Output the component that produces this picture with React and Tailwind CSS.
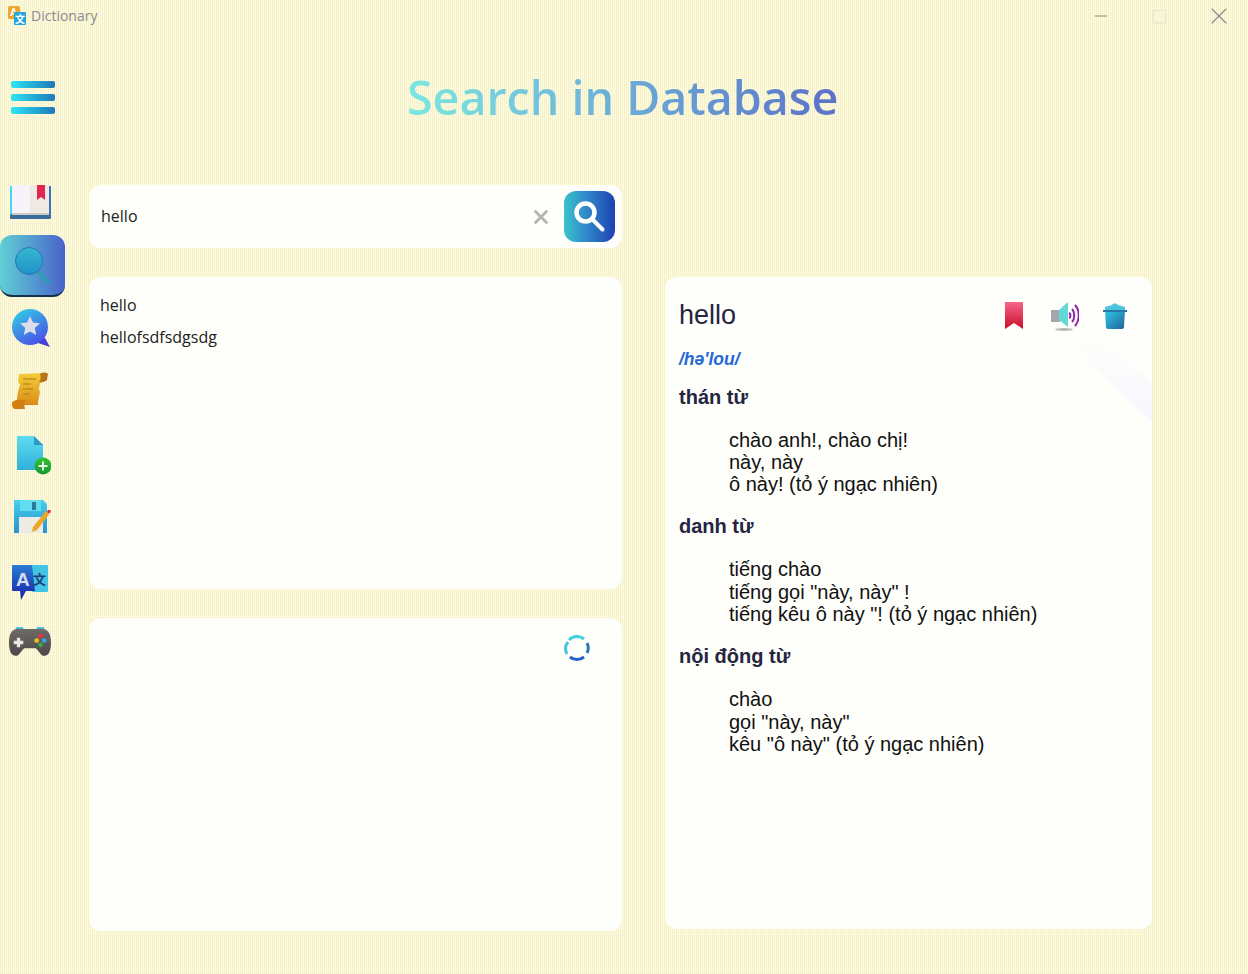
import { X, Minus, Square } from 'lucide-react';

const BookIcon = () => (
  <svg width="42" height="34" viewBox="0 0 42 34">
    <defs>
      <linearGradient id="bookEdge" x1="0" x2="1">
        <stop offset="0" stopColor="#44d8f4" />
        <stop offset="1" stopColor="#3a70a8" />
      </linearGradient>
    </defs>
    <rect x="0" y="1" width="41" height="30" rx="1" fill="url(#bookEdge)" />
    <rect x="0" y="29" width="41" height="5" rx="1.500" fill="#3a6c9c" />
    <path d="M2 0h18v30H2z" fill="#f6f4fa" />
    <path d="M20 0h19v30H20z" fill="#eee9e2" />
    <rect x="2" y="28" width="37" height="2" fill="#cfcac6" />
    <path d="M27 0h8v15l-4-3-4 3z" fill="#e2264f" />
  </svg>
);

const LensIcon = () => (
  <svg width="38" height="38" viewBox="0 0 38 38">
    <defs>
      <linearGradient id="lensFill" x1="0" y1="0" x2="0" y2="1">
        <stop offset="0" stopColor="#35b8cc" />
        <stop offset="1" stopColor="#1f93c9" />
      </linearGradient>
    </defs>
    <path d="M24 26l10 10" stroke="#2e9db8" strokeWidth="4" strokeLinecap="round" />
    <circle cx="15" cy="15" r="13.5" fill="url(#lensFill)" stroke="#2a74b8" strokeWidth="1" />
  </svg>
);

const StarBubbleIcon = () => (
  <svg width="38" height="39" viewBox="0 0 38 39">
    <defs>
      <linearGradient id="bubbleFill" x1="0" y1="0" x2="0.6" y2="1">
        <stop offset="0" stopColor="#2fd6e6" />
        <stop offset="1" stopColor="#4a55e8" />
      </linearGradient>
    </defs>
    <path d="M26 28l7 1 5 9-12-4z" fill="#4a40d8" />
    <circle cx="18" cy="18" r="18" fill="url(#bubbleFill)" />
    <path d="M18 7l3 6.500 7 .800-5.200 4.700 1.400 7-6.200-3.500-6.200 3.500 1.400-7L8 14.300l7-.800z" fill="#dcdde6" />
  </svg>
);

const ScrollIcon = () => (
  <svg width="36" height="37" viewBox="0 0 36 37">
    <defs>
      <linearGradient id="scrollFill" x1="0" y1="0" x2="0" y2="1">
        <stop offset="0" stopColor="#f2cf3a" />
        <stop offset="1" stopColor="#dc8a18" />
      </linearGradient>
    </defs>
    <path d="M7 2l22-1 1 8-2 2-1 6 1 3-1 5-1 5 0 3H6l-1-6 1-8 2-6-2-4z" fill="url(#scrollFill)" />
    <path d="M28 2c2-2 7-2 8 0l-1 6c-2 2-6 3-8 2 2-2 2-6 1-8z" fill="#b8741a" />
    <path d="M0 32c0-3 3-4 6-4h8c-2 2-2 6-1 9H4c-3 0-4-2-4-5z" fill="#d27f14" />
    <path d="M11 7h13M11 12h8M11 17h10M11 22h7" stroke="#c58c1e" strokeWidth="1.600" />
  </svg>
);

const NewFileIcon = () => (
  <svg width="34" height="39" viewBox="0 0 34 39">
    <defs>
      <linearGradient id="fileFill" x1="0" y1="0" x2="0" y2="1">
        <stop offset="0" stopColor="#5fdcf0" />
        <stop offset="1" stopColor="#2fb0dc" />
      </linearGradient>
      <linearGradient id="plusFill" x1="0" y1="0" x2="0" y2="1">
        <stop offset="0" stopColor="#32c02e" />
        <stop offset="1" stopColor="#169a30" />
      </linearGradient>
    </defs>
    <path d="M0 0h17l9 9v25H0z" fill="url(#fileFill)" />
    <path d="M17 0l9 9h-9z" fill="#2c9ac4" />
    <circle cx="26" cy="30" r="8.500" fill="url(#plusFill)" />
    <path d="M26 25.500v9M21.500 30h9" stroke="#e6f5e4" strokeWidth="2" />
  </svg>
);

const SaveIcon = () => (
  <svg width="37" height="34" viewBox="0 0 37 34">
    <defs>
      <linearGradient id="diskFill" x1="0" y1="0" x2="0" y2="1">
        <stop offset="0" stopColor="#46d0ea" />
        <stop offset="1" stopColor="#2a92cc" />
      </linearGradient>
    </defs>
    <path d="M0 0h29l4 4v29H0z" fill="url(#diskFill)" />
    <rect x="6" y="0" width="21" height="11" fill="#62dcee" />
    <rect x="18" y="2" width="4" height="8" fill="#2a7a9c" />
    <rect x="5" y="17" width="24" height="16" fill="#eeeae4" />
    <path d="M19 27L32 11l3.500 3L23 30l-5 2z" fill="#eda626" />
    <circle cx="35" cy="11.500" r="1.800" fill="#e2264f" />
  </svg>
);

const TranslateIcon = () => (
  <svg width="36" height="36" viewBox="0 0 36 36">
    <defs>
      <linearGradient id="tlLeft" x1="0" y1="0" x2="0" y2="1">
        <stop offset="0" stopColor="#2a7cd0" />
        <stop offset="1" stopColor="#1620a8" />
      </linearGradient>
    </defs>
    <path d="M14 0h21a1 1 0 0 1 1 1v25a1 1 0 0 1-1 1H20z" fill="#42c4e4" />
    <path d="M1 0h19l3 26H14l-5 9-1-9H1a1 1 0 0 1-1-1V1a1 1 0 0 1 1-1z" fill="url(#tlLeft)" />
    <text x="4" y="21" fontFamily="Liberation Sans, sans-serif" fontWeight="700" fontSize="19" fill="#d6dcea">A</text>
    <text x="21" y="19" fontFamily="Noto Sans CJK SC, sans-serif" fontWeight="700" fontSize="13" fill="#1d3f78">文</text>
  </svg>
);

const GamepadIcon = () => (
  <svg width="42" height="29" viewBox="0 0 44 30">
    <defs>
      <linearGradient id="padFill" x1="0" y1="0" x2="0" y2="1">
        <stop offset="0" stopColor="#6e6a6a" />
        <stop offset="1" stopColor="#4c4848" />
      </linearGradient>
    </defs>
    <rect x="7" y="0" width="8" height="4" fill="#48b8d8" />
    <rect x="29" y="0" width="8" height="4" fill="#48b8d8" />
    <path d="M9 2h26c6 0 9 5 9 14 0 8-2 14-7 14-4 0-6-6-9-8H16c-3 2-5 8-9 8-5 0-7-6-7-14C0 7 3 2 9 2z" fill="url(#padFill)" />
    <path d="M10 11v10M5 16h10" stroke="#e8e8e6" strokeWidth="3.500" />
    <circle cx="33" cy="9.500" r="2.500" fill="#e2324a" />
    <circle cx="29" cy="14" r="2.500" fill="#e8c21e" />
    <circle cx="37" cy="14" r="2.500" fill="#2ea8e0" />
    <circle cx="33" cy="18.500" r="2.500" fill="#33b03c" />
  </svg>
);

const AppIcon = () => (
  <svg width="20" height="20" viewBox="0 0 20 20">
    <rect x="1" y="0" width="12" height="13" rx="1.500" fill="#eda82c" />
    <text x="3" y="10" fontFamily="Liberation Sans, sans-serif" fontWeight="700" fontSize="10" fill="#fff">A</text>
    <rect x="7" y="6" width="12" height="13" rx="1" fill="#27a4dc" />
    <text x="8" y="17" fontFamily="Noto Sans CJK SC, sans-serif" fontWeight="700" fontSize="10" fill="#fff">文</text>
  </svg>
);

const SearchGlyph = () => (
  <svg width="32" height="32" viewBox="0 0 32 32" fill="none" stroke="#fff">
    <circle cx="11.500" cy="11.500" r="9" strokeWidth="4.500" />
    <path d="M18.500 18.500l10 10" strokeWidth="4" strokeLinecap="round" />
  </svg>
);

const Bookmark = () => (
  <svg width="20" height="28" viewBox="0 0 20 28">
    <defs>
      <linearGradient id="markFill" x1="0" y1="0" x2="0" y2="1">
        <stop offset="0" stopColor="#f8648a" />
        <stop offset="1" stopColor="#c8102a" />
      </linearGradient>
    </defs>
    <path d="M1 0h18v27l-9-6-9 6z" fill="url(#markFill)" />
  </svg>
);

const Speaker = () => (
  <svg width="28" height="30" viewBox="0 0 28 30" fill="none">
    <rect x="0" y="9" width="9" height="12" fill="#a4a8ac" />
    <path d="M8 9l9-8v25l-9-7z" fill="#62d8d8" />
    <path d="M18 12c2 1 2 4 0 5" stroke="#8e24aa" strokeWidth="2" />
    <path d="M21 8c3 3 3 10 0 13" stroke="#8e24aa" strokeWidth="2" />
    <path d="M24 4c5 5 5 15 0 21" stroke="#8e24aa" strokeWidth="2" />
    <ellipse cx="13" cy="28.500" rx="9" ry="1.500" fill="#b8b8b8" />
  </svg>
);

const Trash = () => (
  <svg width="24" height="26" viewBox="0 0 24 26">
    <defs>
      <linearGradient id="binFill" x1="0" y1="0" x2="1" y2="1">
        <stop offset="0" stopColor="#2ccde6" />
        <stop offset="1" stopColor="#24609c" />
      </linearGradient>
    </defs>
    <path d="M9 2c1-2 5-2 6 0l7 2v3H2V4z" fill="#4cc4dc" />
    <path d="M2 7h20l-1 17c0 1-1 2-2 2H5c-1 0-2-1-2-2z" fill="url(#binFill)" />
    <rect x="0" y="7" width="24" height="2" fill="#2678a8" />
  </svg>
);

const Spinner = () => (
  <svg width="28" height="28" viewBox="0 0 28 28" fill="none" strokeWidth="3">
    <path d="M6 6a11 11 0 0 1 15-1" stroke="#40d0e0" />
    <path d="M24 9a11 11 0 0 1 0 10" stroke="#2a78b8" />
    <path d="M21 23a11 11 0 0 1-14 0" stroke="#1f62c8" />
    <path d="M4 20a11 11 0 0 1 1-12" stroke="#48c4e4" />
  </svg>
);

const sections = [
  {
    title: 'thán từ',
    lines: ['chào anh!, chào chị!', 'này, này', 'ô này! (tỏ ý ngạc nhiên)'],
  },
  {
    title: 'danh từ',
    lines: ['tiếng chào', 'tiếng gọi "này, này" !', 'tiếng kêu ô này "! (tỏ ý ngạc nhiên)'],
  },
  {
    title: 'nội động từ',
    lines: ['chào', 'gọi "này, này"', 'kêu "ô này" (tỏ ý ngạc nhiên)'],
  },
];

const panel = 'rounded-xl bg-[#fefefa]';

export default function App() {
  return (
    <div className="h-[974px] w-[1248px] overflow-hidden bg-[#f3f1f6] bg-[linear-gradient(90deg,#f9f3b4_1px,transparent_1px),linear-gradient(#fffff4_1px,transparent_1px)] bg-[length:2px_2px] font-['Open_Sans',sans-serif] text-[#222]">
      <div className="flex h-8 items-center">
        <div className="ml-[7px] flex items-center gap-[4px]">
          <AppIcon />
          <span className="text-sm text-[#8a8a90]">Dictionary</span>
        </div>
        <div className="ml-auto flex items-center">
          <div className="flex w-[59px] justify-center"><Minus size={20} strokeWidth={1.2} className="text-[#8c8c78]" /></div>
          <div className="flex w-[59px] justify-center"><Square size={17} strokeWidth={1.400} className="text-[#e6e2cc]" /></div>
          <div className="flex w-[59px] justify-center"><X size={28} strokeWidth={1} className="text-[#8a8a8a]" /></div>
        </div>
      </div>

      <div className="flex h-[153px] items-start">
        <div className="ml-[11px] mt-[49px] flex w-[44px] flex-col gap-[6px]">
          <div className="h-[7px] rounded-[2px] bg-gradient-to-r from-[#2ee6f4] to-[#1f78b8]" />
          <div className="h-[7px] rounded-[2px] bg-gradient-to-r from-[#2ee6f4] to-[#1f78b8]" />
          <div className="h-[7px] rounded-[2px] bg-gradient-to-r from-[#2ee6f4] to-[#1f78b8]" />
        </div>
        <h1 className="ml-[352px] mt-[33px] bg-gradient-to-r from-[#7ce8e0] to-[#5c70c8] bg-clip-text text-[46.600px] leading-[64px] font-semibold text-transparent">
          Search in Database
        </h1>
      </div>

      <div className="flex">
        <nav className="flex w-[89px] shrink-0 flex-col">
          <div className="flex h-[50px] w-[65px] items-start pl-[10px]"><BookIcon /></div>
          <div className="flex h-[62px] w-[65px] items-center justify-center rounded-xl border-b-2 border-[#15304a] bg-gradient-to-r from-[#5fd0d4] to-[#4a62c8]"><LensIcon /></div>
          <div className="flex h-[75px] w-[65px] items-start pl-[12px] pt-[12px]"><StarBubbleIcon /></div>
          <div className="flex h-[64px] w-[65px] items-start pl-[12px]"><ScrollIcon /></div>
          <div className="flex h-[64px] w-[65px] items-start pl-[17px]"><NewFileIcon /></div>
          <div className="flex h-[65px] w-[65px] items-start pl-[14px]"><SaveIcon /></div>
          <div className="flex h-[62px] w-[65px] items-start pl-[12px]"><TranslateIcon /></div>
          <div className="flex h-[40px] w-[65px] items-start pl-[9px]"><GamepadIcon /></div>
        </nav>

        <div className="flex w-[533px] shrink-0 flex-col">
          <div className={`${panel} flex h-[63px] items-center pl-3 pr-[7px]`}>
            <span className="-mt-[2px] flex-1 text-base text-[#222]">hello</span>
            <X size={22} strokeWidth={3} className="mr-[12px] text-[#b4b4ac]" />
            <button className="flex h-[51px] w-[51px] items-center justify-center rounded-xl bg-gradient-to-r from-[#3cc4cc] via-[#3080c8] to-[#2040b0]">
              <SearchGlyph />
            </button>
          </div>

          <div className={`${panel} mt-[29px] flex h-[312px] flex-col gap-[10px] px-[11px] py-[17px] text-base leading-[22px]`}>
            <div>hello</div>
            <div>hellofsdfsdgsdg</div>
          </div>

          <div className={`${panel} mt-[29px] flex h-[313px] justify-end pr-[31px] pt-[16px]`}>
            <Spinner />
          </div>
        </div>

        <div className={`${panel} relative ml-[43px] mt-[92px] h-[652px] w-[487px] px-[14px] font-['Liberation_Sans',sans-serif]`}>
          <div className="absolute right-0 top-[55px] h-[90px] w-[95px] bg-gradient-to-b from-[#fefefa] to-[#f6f7ff] [clip-path:polygon(0_0,30%_0,100%_55%,100%_100%)]" />
          <div className="relative flex h-[73px] items-start justify-between pt-[21px]">
            <div className="text-[27px] leading-[34px] text-[#25253f]">hello</div>
            <div className="mr-[11px] flex items-center gap-[24px] pt-[3px]">
              <div className="mr-[3px]"><Bookmark /></div>
              <Speaker />
              <Trash />
            </div>
          </div>
          <div className="relative -mb-[2px] text-[17.500px] leading-[18px] font-bold italic text-[#2468d8]">/hə'lou/</div>
          {sections.map((section) => (
            <section key={section.title} className="relative mt-[19.600px]">
              <h2 className="text-[20px] leading-[22px] font-bold text-[#25253f]">{section.title}</h2>
              <div className="mt-[21px] pl-[50px] text-[20px] leading-[22.400px] text-[#111]">
                {section.lines.map((line) => (
                  <div key={line}>{line}</div>
                ))}
              </div>
            </section>
          ))}
        </div>
      </div>
    </div>
  );
}
